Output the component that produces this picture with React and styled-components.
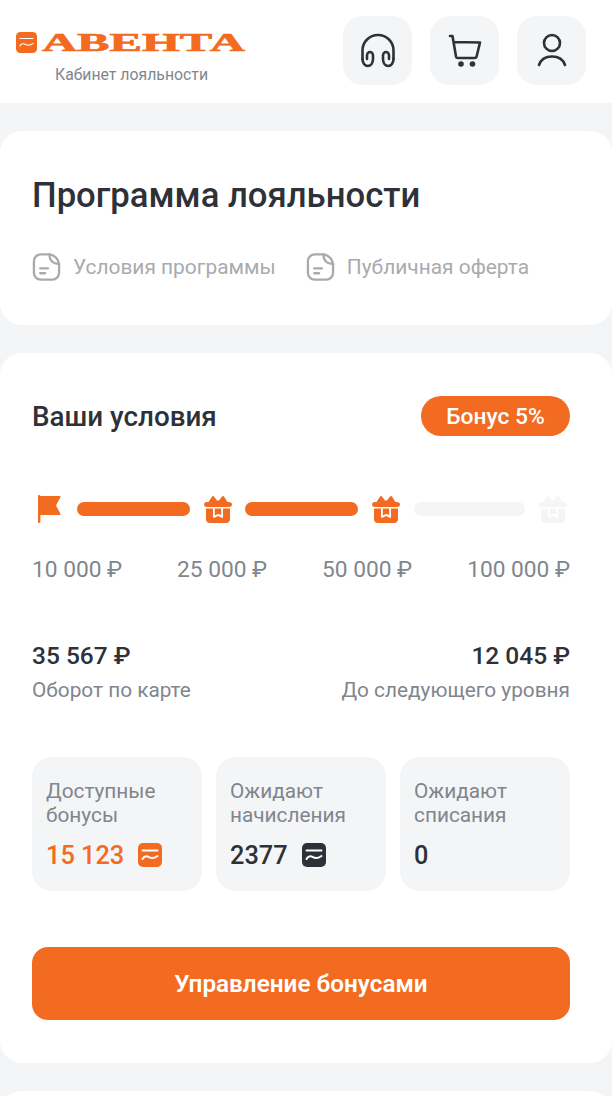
import React from "react";
import styled, { createGlobalStyle } from "styled-components";

const ORANGE = "#f36b21";
const DARK = "#2e3138";
const GRAY = "#7f868e";
const LIGHT = "#f4f5f7";

const GlobalStyle = createGlobalStyle`
  html, body {
    margin: 0;
    padding: 0;
    height: 100%;
    overflow: hidden;
    background: ${LIGHT};
    font-family: Roboto, "Liberation Sans", sans-serif;
  }
  * { box-sizing: border-box; }
`;

const Page = styled.div`
  display: flex;
  flex-direction: column;
  gap: 28px;
  width: 612px;
`;

const Header = styled.header`
  display: flex;
  justify-content: space-between;
  height: 103px;
  padding: 16px 26px 0 16px;
  background: #fff;
`;

const Brand = styled.div`
  display: flex;
  flex-direction: column;
  align-items: center;
  width: 231px;
  padding-top: 16px;
`;

const LogoRow = styled.div`
  display: flex;
  align-items: center;
  gap: 5px;
  width: 100%;
  height: 21px;
`;

const LogoWord = styled.span`
  display: inline-block;
  font-family: "Liberation Serif", serif;
  font-weight: 700;
  font-size: 26px;
  line-height: 21px;
  color: ${ORANGE};
  -webkit-text-stroke: 0.7px ${ORANGE};
  transform: scaleX(1.87);
  transform-origin: left center;
  white-space: nowrap;
`;

const BrandSub = styled.div`
  margin-top: 12px;
  font-size: 15.8px;
  line-height: 20px;
  color: ${GRAY};
`;

const Actions = styled.div`
  display: flex;
  gap: 18px;
`;

const ActionButton = styled.button`
  display: flex;
  align-items: center;
  justify-content: center;
  width: 69px;
  height: 69px;
  padding: 0;
  border: none;
  border-radius: 20px;
  background: ${LIGHT};
  color: ${DARK};
`;

const Card = styled.section`
  padding: ${(p) => p.$padding};
  min-height: ${(p) => p.$minHeight || "auto"};
  border-radius: 22px;
  background: #fff;
`;

const Title = styled.h1`
  margin: 0;
  font-size: 34.7px;
  line-height: 40px;
  font-weight: 500;
  color: ${DARK};
`;

const Links = styled.div`
  display: flex;
  gap: 30px;
  margin-top: 37px;
`;

const DocLink = styled.a`
  display: flex;
  align-items: center;
  gap: 12px;
  font-size: 20.9px;
  line-height: 30px;
  color: #a8abae;
`;

const TitleRow = styled.div`
  display: flex;
  justify-content: space-between;
  align-items: center;
  height: 40px;
`;

const SectionTitle = styled.h2`
  margin: 0;
  font-size: 27.8px;
  font-weight: 500;
  color: ${DARK};
`;

const Badge = styled.div`
  display: flex;
  align-items: center;
  justify-content: center;
  width: 149px;
  height: 40px;
  border-radius: 20px;
  background: ${ORANGE};
  color: #fff;
  font-size: 22.8px;
  font-weight: 500;
`;

const Progress = styled.div`
  display: flex;
  align-items: center;
  justify-content: space-between;
  margin-top: 55px;
  padding: 0 3px 0 6px;
  height: 36px;
`;

const Segment = styled.div`
  width: ${(p) => p.$width}px;
  height: 14px;
  border-radius: 7px;
  background: ${(p) => (p.$active ? ORANGE : LIGHT)};
`;

const Levels = styled.div`
  display: flex;
  justify-content: space-between;
  margin-top: 29px;
  font-size: 22.7px;
  line-height: 28px;
  color: ${GRAY};
`;

const Totals = styled.div`
  display: flex;
  justify-content: space-between;
  margin-top: 58px;
`;

const Total = styled.div`
  text-align: ${(p) => (p.$right ? "right" : "left")};
`;

const TotalValue = styled.div`
  font-size: 24.5px;
  line-height: 28px;
  font-weight: 500;
  color: ${DARK};
`;

const TotalLabel = styled.div`
  margin-top: 6px;
  font-size: 20.8px;
  line-height: 28px;
  color: ${GRAY};
`;

const Bonuses = styled.div`
  display: grid;
  grid-template-columns: repeat(3, 170px);
  justify-content: space-between;
  margin-top: 53px;
`;

const BonusCard = styled.div`
  height: 134px;
  padding: 22px 14px 0;
  border-radius: 20px;
  background: ${LIGHT};
`;

const BonusLabel = styled.div`
  font-size: 20.8px;
  line-height: 24px;
  color: ${GRAY};
`;

const BonusValue = styled.div`
  display: flex;
  align-items: center;
  gap: 14px;
  margin-top: 13px;
  height: 30px;
  font-size: 25.3px;
  font-weight: 500;
  color: ${(p) => (p.$accent ? ORANGE : DARK)};
`;

const SubmitButton = styled.button`
  display: block;
  width: 100%;
  height: 73px;
  margin-top: 56px;
  border: none;
  border-radius: 16px;
  background: ${ORANGE};
  color: #fff;
  font-family: inherit;
  font-size: 24.3px;
  font-weight: 600;
`;

const HeadsetIcon = () => (
  <svg width="36" height="36" viewBox="0 0 36 36" fill="none" stroke="currentColor" strokeWidth="2.6" strokeLinecap="round" strokeLinejoin="round">
    <path d="M2.500 26V17.500a15.500 15.500 0 0 1 31 0V26" />
    <path d="M2.500 26c0 4 2.300 7 5.300 7s5.200-3 5.200-7v-3.500c0-2-1.300-3.500-3-3.500s-3 1.500-3 3.500V26" />
    <path d="M33.500 26c0 4-2.300 7-5.300 7s-5.200-3-5.200-7v-3.500c0-2 1.300-3.500 3-3.500s3 1.500 3 3.500V26" />
  </svg>
);

const CartIcon = () => (
  <svg width="34" height="36" viewBox="0 0 34 36" fill="none" stroke="currentColor" strokeWidth="2.6" strokeLinecap="round" strokeLinejoin="round">
    <path d="M2 3h2.500L8 23.500c.2 1 .8 1.500 1.800 1.500h17c1 0 1.600-.5 1.800-1.500L32 9.500 5.500 9" />
    <circle cx="13" cy="31" r="2.800" fill="currentColor" stroke="none" />
    <circle cx="24.500" cy="31" r="2.800" fill="currentColor" stroke="none" />
  </svg>
);

const UserIcon = () => (
  <svg width="32" height="36" viewBox="0 0 32 36" fill="none" stroke="currentColor" strokeWidth="2.6" strokeLinecap="round">
    <circle cx="16" cy="10" r="8" />
    <path d="M3 32C5 26 10 23.500 16 23.500S27 26 29 32" />
  </svg>
);

const DocIcon = () => (
  <svg width="29" height="30" viewBox="0 0 30 30" fill="none" stroke="#a8abae" strokeWidth="2.400" strokeLinecap="round" strokeLinejoin="round">
    <path d="M18 2H9C5 2 2 5 2 9v12c0 4 3 7 7 7h12c4 0 7-3 7-7v-9" />
    <path d="M18 2c0 6 3 9.500 10 10-1-5-4-9-10-10Z" />
    <path d="M8.500 16.500h8M8.500 21.500h5" />
  </svg>
);

const FlagIcon = () => (
  <svg width="25" height="28" viewBox="0 0 25 28" fill={ORANGE}>
    <rect x="0" y="0" width="2.400" height="28" rx="1.200" />
    <path d="M2 1h19.500c1 0 1.300.7.800 1.500L18 10.500l4.300 8c.5.800.2 1.500-.8 1.500H2Z" />
  </svg>
);

const GiftIcon = ({ color }) => (
  <svg width="28" height="28" viewBox="0 0 28 28">
    <path fill={color} d="M3 12C1 12 0 10.800 0 9.500S1 7 3 7h1.500L8 1.500c.6-.8 1.500-.8 2 0L13 5.500h2l3-4c.6-.8 1.500-.8 2 0L23.500 7H25c2 0 3 1.200 3 2.500S27 12 25 12Z" />
    <path fill={color} fillRule="evenodd" d="M2 13.500h24V24c0 2.500-1.500 4-4 4H6c-2.500 0-4-1.500-4-4ZM9 13.500V22c0 .8.700 1.200 1.400.8L14 21l3.600 1.800c.7.400 1.400 0 1.400-.8v-8.500h-1.800v6.300L14 19l-3.200 1.600v-7.100Z" />
  </svg>
);

const BonusIcon = ({ color, size = 24, line = 2 }) => (
  <svg width={size} height={size} viewBox="0 0 24 24">
    <rect width="24" height="24" rx="5" fill={color} />
    <path d="M4.500 7.500h15" stroke="#fff" strokeWidth={line} strokeLinecap="round" />
    <path d="M4.500 16c1.500-3 4-3.200 6.500-1.800s5 1.300 8.500-1.200" fill="none" stroke="#fff" strokeWidth={line} strokeLinecap="round" />
  </svg>
);

const levels = ["10 000 ₽", "25 000 ₽", "50 000 ₽", "100 000 ₽"];

const bonuses = [
  { label: ["Доступные", "бонусы"], value: "15 123", accent: true, icon: ORANGE },
  { label: ["Ожидают", "начисления"], value: "2377", icon: DARK },
  { label: ["Ожидают", "списания"], value: "0" },
];

export default function App() {
  return (
    <Page>
      <GlobalStyle />
      <Header>
        <Brand>
          <LogoRow>
            <BonusIcon color={ORANGE} size={21} line={1.2} />
            <LogoWord>АВЕНТА</LogoWord>
          </LogoRow>
          <BrandSub>Кабинет лояльности</BrandSub>
        </Brand>
        <Actions>
          <ActionButton><HeadsetIcon /></ActionButton>
          <ActionButton><CartIcon /></ActionButton>
          <ActionButton><UserIcon /></ActionButton>
        </Actions>
      </Header>

      <Card $padding="44px 32px 43px">
        <Title>Программа лояльности</Title>
        <Links>
          <DocLink><DocIcon />Условия программы</DocLink>
          <DocLink><DocIcon />Публичная оферта</DocLink>
        </Links>
      </Card>

      <Card $padding="43px 42px 43px 32px">
        <TitleRow>
          <SectionTitle>Ваши условия</SectionTitle>
          <Badge>Бонус 5%</Badge>
        </TitleRow>

        <Progress>
          <FlagIcon />
          <Segment $width={113} $active />
          <GiftIcon color={ORANGE} />
          <Segment $width={113} $active />
          <GiftIcon color={ORANGE} />
          <Segment $width={111} />
          <GiftIcon color={LIGHT} />
        </Progress>

        <Levels>
          {levels.map((level) => (
            <span key={level}>{level}</span>
          ))}
        </Levels>

        <Totals>
          <Total>
            <TotalValue>35 567 ₽</TotalValue>
            <TotalLabel>Оборот по карте</TotalLabel>
          </Total>
          <Total $right>
            <TotalValue>12 045 ₽</TotalValue>
            <TotalLabel>До следующего уровня</TotalLabel>
          </Total>
        </Totals>

        <Bonuses>
          {bonuses.map((b) => (
            <BonusCard key={b.label.join(" ")}>
              <BonusLabel>{b.label[0]}<br />{b.label[1]}</BonusLabel>
              <BonusValue $accent={b.accent}>
                {b.value}
                {b.icon && <BonusIcon color={b.icon} />}
              </BonusValue>
            </BonusCard>
          ))}
        </Bonuses>

        <SubmitButton>Управление бонусами</SubmitButton>
      </Card>

      <Card $padding="0" $minHeight="100px" />
    </Page>
  );
}
